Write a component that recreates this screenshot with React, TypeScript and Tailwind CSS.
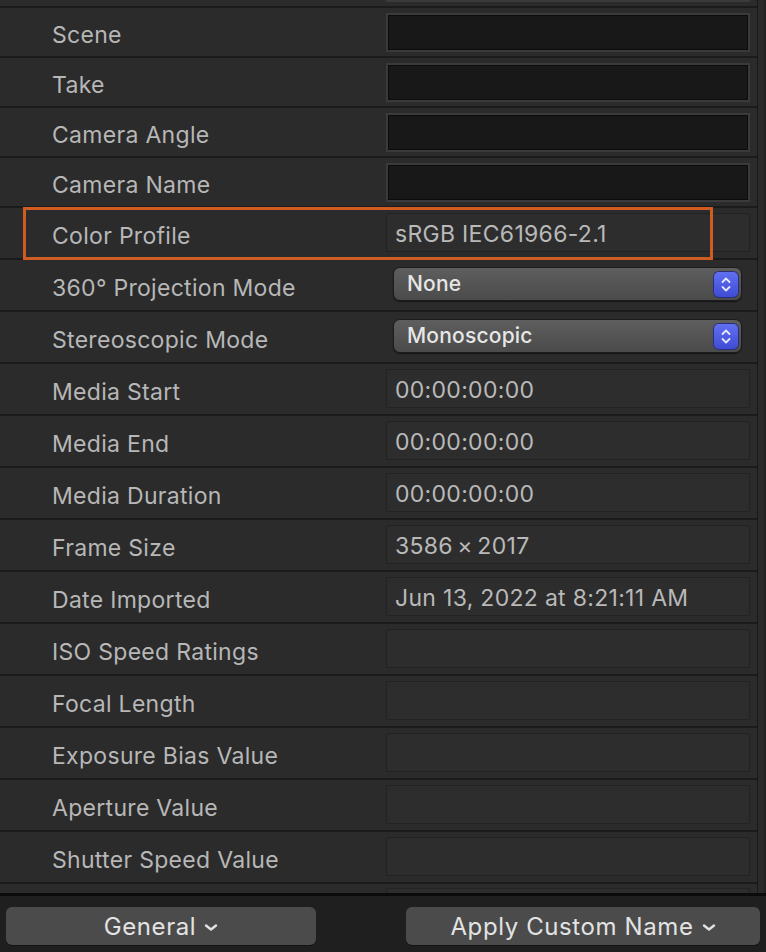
import type { ReactNode } from "react";

type Field =
  | { kind: "dark" }
  | { kind: "text"; value?: string }
  | { kind: "popup"; value: string };

type Row = { label: string; field: Field; tall?: boolean };

const rows: Row[] = [
  { label: "Scene", field: { kind: "dark" } },
  { label: "Take", field: { kind: "dark" } },
  { label: "Camera Angle", field: { kind: "dark" } },
  { label: "Camera Name", field: { kind: "dark" } },
  { label: "Color Profile", field: { kind: "text", value: "sRGB IEC61966-2.1" }, tall: true },
  { label: "360° Projection Mode", field: { kind: "popup", value: "None" }, tall: true },
  { label: "Stereoscopic Mode", field: { kind: "popup", value: "Monoscopic" }, tall: true },
  { label: "Media Start", field: { kind: "text", value: "00:00:00:00" }, tall: true },
  { label: "Media End", field: { kind: "text", value: "00:00:00:00" }, tall: true },
  { label: "Media Duration", field: { kind: "text", value: "00:00:00:00" }, tall: true },
  { label: "Frame Size", field: { kind: "text", value: "3586\u2009×\u20092017" }, tall: true },
  { label: "Date Imported", field: { kind: "text", value: "Jun 13, 2022 at 8:21:11 AM" }, tall: true },
  { label: "ISO Speed Ratings", field: { kind: "text" }, tall: true },
  { label: "Focal Length", field: { kind: "text" }, tall: true },
  { label: "Exposure Bias Value", field: { kind: "text" }, tall: true },
  { label: "Aperture Value", field: { kind: "text" }, tall: true },
  { label: "Shutter Speed Value", field: { kind: "text" }, tall: true },
];

function Stepper() {
  return (
    <span className="flex h-[25px] w-[24px] items-center justify-center rounded-[5px] bg-gradient-to-b from-[#6170f2] to-[#3f4bd4] shadow-[0_0_0_1px_#2a2f7a]">
      <svg width="12" height="17" viewBox="0 0 12 17" fill="none">
        <path d="M2.5 6 6 2.5 9.5 6" stroke="#e4e7ff" strokeWidth="1.8" strokeLinecap="round" strokeLinejoin="round" />
        <path d="M2.5 11 6 14.5 9.5 11" stroke="#e4e7ff" strokeWidth="1.8" strokeLinecap="round" strokeLinejoin="round" />
      </svg>
    </span>
  );
}

function Chevron() {
  return (
    <svg width="14" height="9" viewBox="0 0 14 9" fill="none" className="ml-[8px] mt-[2px]">
      <path d="M2 2.5 7 6.5 12 2.5" stroke="#e2e2e2" strokeWidth="2.4" strokeLinecap="round" strokeLinejoin="round" />
    </svg>
  );
}

function FieldCell({ field }: { field: Field }) {
  if (field.kind === "dark") {
    return (
      <div className="mt-[5px] h-[39px] w-[364px] border-2 border-[#3a3a3a] bg-[#181818] shadow-[inset_0_0_0_1px_#0c0c0c]" />
    );
  }
  if (field.kind === "popup") {
    return (
      <div className="ml-[7px] mt-[7px] flex h-[34px] w-[349px] items-center justify-between rounded-[7px] border border-[#1c1c1c] bg-gradient-to-b from-[#5e5e5e] to-[#4b4b4b] pl-[13px] pr-[3px] shadow-[0_1px_1px_rgba(0,0,0,0.5)]">
        <span className="text-[21px] font-medium tracking-[0.2px] text-[#e6e6e6]">{field.value}</span>
        <Stepper />
      </div>
    );
  }
  return (
    <div className="mt-[5px] flex h-[39px] w-[364px] items-center rounded-[2px] border border-[#232323] bg-[#2d2d2d] pl-[8px] pt-[3px] text-[#b9b9b9]">
      {field.value}
    </div>
  );
}

function PropRow({ row }: { row: Row }) {
  return (
    <div
      className={`flex shrink-0 border-b-2 border-[#1b1b1b] ${row.tall ? "h-[52px]" : "h-[50px]"}`}
    >
      <div className="flex w-[386px] items-center pl-[52px] pt-[6px] text-[#b7b7b7]">{row.label}</div>
      <FieldCell field={row.field} />
    </div>
  );
}

function FooterButton({ className, children }: { className: string; children: ReactNode }) {
  return (
    <button
      type="button"
      className={`flex h-[38px] items-center justify-center rounded-[6px] bg-[#4b4b4b] pt-[1px] text-[24px] tracking-[0.6px] text-[#e3e3e3] shadow-[0_1px_0_rgba(0,0,0,0.4)] ${className}`}
    >
      {children}
      <Chevron />
    </button>
  );
}

export default function App() {
  return (
    <div className="flex h-[952px] w-[766px] flex-col overflow-hidden bg-[#2b2b2b] font-['Inter','Liberation_Sans',sans-serif] text-[23px] tracking-[0.3px]">
      <div className="relative flex min-h-0 flex-1">
        <div className="flex w-[757px] flex-col overflow-hidden">
          {/* row cut off at the top */}
          <div className="flex h-[8px] shrink-0 items-start border-b-2 border-[#1b1b1b]">
            <div className="ml-[386px] h-[2px] w-[364px] bg-[#3a3a3a]" />
          </div>
          {rows.map((row) => (
            <PropRow key={row.label} row={row} />
          ))}
          {/* row cut off at the bottom */}
          <div className="flex h-[9px] shrink-0 items-start">
            <div className="ml-[386px] mt-[4px] h-[5px] w-[364px] rounded-t-[2px] border border-b-0 border-[#232323] bg-[#2d2d2d]" />
          </div>
        </div>
        <div className="w-[9px] border-l border-[#1a1a1a] bg-[#2a2a2a] shadow-[inset_-2px_0_0_#222]" />

        {/* highlight around Color Profile */}
        <div className="pointer-events-none absolute left-[23px] top-[207px] h-[53px] w-[690px] border-[3px] border-[#cf5c20]" />
      </div>

      <footer className="flex h-[59px] shrink-0 items-start justify-between border-t-[3px] border-[#0b0b0b] bg-[#1f1f1f] pl-[6px] pr-[6px] pt-[11px]">
        <FooterButton className="w-[310px]">General</FooterButton>
        <FooterButton className="w-[354px]">Apply Custom Name</FooterButton>
      </footer>
    </div>
  );
}
